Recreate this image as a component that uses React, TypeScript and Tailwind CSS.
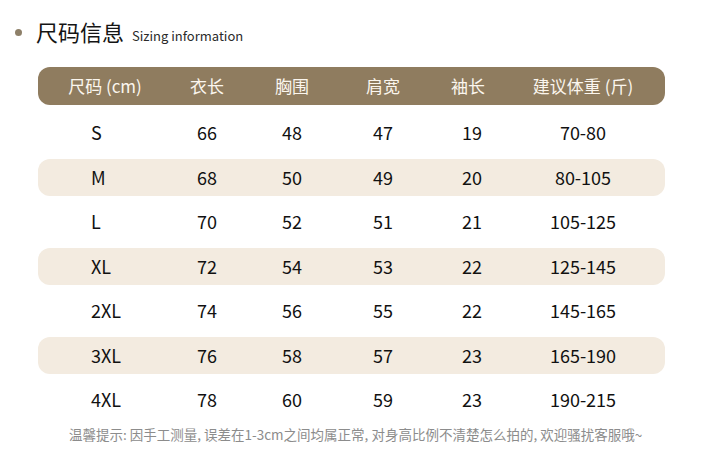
import React from "react";

const rows = [
  ["S", "66", "48", "47", "19", "70-80"],
  ["M", "68", "50", "49", "20", "80-105"],
  ["L", "70", "52", "51", "21", "105-125"],
  ["XL", "72", "54", "53", "22", "125-145"],
  ["2XL", "74", "56", "55", "22", "145-165"],
  ["3XL", "76", "58", "57", "23", "165-190"],
  ["4XL", "78", "60", "59", "23", "190-215"],
];

const headers = ["尺码 (cm)", "衣长", "胸围", "肩宽", "袖长", "建议体重 (斤)"];

// column widths shared by header and rows
const colW = ["w-[134px]", "w-[70px]", "w-[100px]", "w-[82px]", "w-[88px]", "w-[142px]"];

export default function App() {
  return (
    <div
      className="w-[711px] h-[455px] bg-white overflow-hidden"
      style={{ fontFamily: '"Noto Sans CJK SC", "Noto Sans", sans-serif' }}
    >
      {/* title */}
      <div className="flex items-center pl-[15px] pt-[19px] h-[45px]">
        <span className="w-[7px] h-[7px] rounded-full bg-[#8e8069]" />
        <div className="flex items-baseline ml-[14px]">
          <span className="text-[22px] leading-[26px] text-[#141414]">尺码信息</span>
          <span className="ml-[8px] text-[13px] text-[#2a2a2a]">Sizing information</span>
        </div>
      </div>

      {/* table */}
      <div className="ml-[38px] w-[627px] mt-[22px]">
        <div className="flex items-center h-[38px] rounded-[12px] bg-[#8f7c5f] text-[#fbf6ee] text-[17px]">
          {headers.map((h, i) => (
            <div key={h} className={`${colW[i]} text-center`}>
              {h}
            </div>
          ))}
        </div>

        <div className="flex flex-col gap-[7.5px] mt-[9px]">
          {rows.map((r, ri) => (
            <div
              key={r[0]}
              className={`flex items-center h-[37px] rounded-[12px] text-[18px] text-[#111111] ${
                ri % 2 === 1 ? "bg-[#f3ebe0]" : ""
              }`}
            >
              <div className={`${colW[0]} pl-[53px]`}>{r[0]}</div>
              <div className={`${colW[1]} text-center`}>{r[1]}</div>
              <div className={`${colW[2]} text-center`}>{r[2]}</div>
              <div className={`${colW[3]} text-center`}>{r[3]}</div>
              <div className={`${colW[4]} text-center pl-[8px]`}>{r[4]}</div>
              <div className={`${colW[5]} text-center`}>{r[5]}</div>
            </div>
          ))}
        </div>
      </div>

      {/* footer note */}
      <div className="pl-[69px] mt-[7px] text-[13.5px] leading-[18px] text-[#8c8c8c]">
        温馨提示: 因手工测量, 误差在1-3cm之间均属正常, 对身高比例不清楚怎么拍的, 欢迎骚扰客服哦~
      </div>
    </div>
  );
}
